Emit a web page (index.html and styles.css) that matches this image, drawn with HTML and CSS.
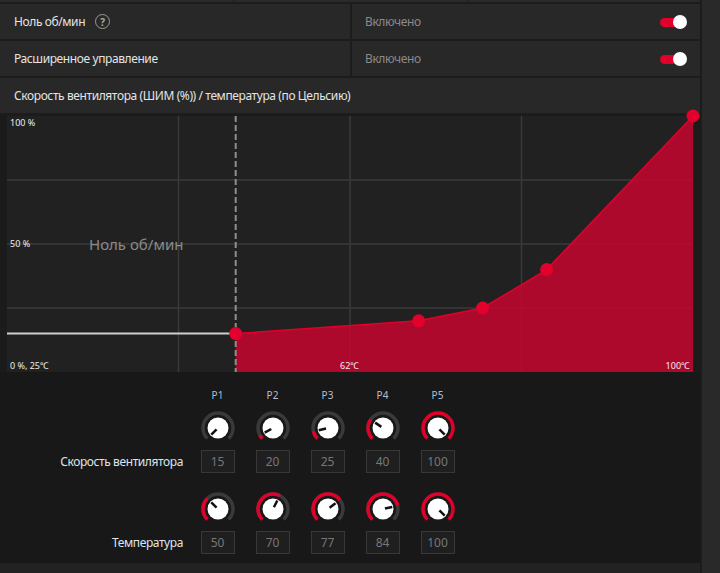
FILE: index.html
```html
<!DOCTYPE html>
<html lang="ru">
<head>
<meta charset="utf-8">
<title>Fan tuning</title>
<link rel="stylesheet" href="styles.css">
</head>
<body>
<div class="app">
  <div class="main">
    <div class="toprow"><div class="tcell"></div><div class="tcell"></div><div class="tcell"></div></div>
    <div class="row">
      <div class="cell"><span class="label">Ноль об/мин</span><span class="help">?</span></div>
      <div class="cell cell-value"><span class="value">Включено</span><span class="toggle"><span class="toggle-knob"></span></span></div>
    </div>
    <div class="row">
      <div class="cell"><span class="label">Расширенное управление</span></div>
      <div class="cell cell-value"><span class="value">Включено</span><span class="toggle"><span class="toggle-knob"></span></span></div>
    </div>
    <div class="title">Скорость вентилятора (ШИМ (%)) / температура (по Цельсию)</div>
    <div class="panel">
      <div class="chart">
        <svg class="chart-svg" width="686" height="256" viewBox="0 0 686 256">
          <g class="grid">
            <line x1="171.5" y1="0" x2="171.5" y2="256"/>
            <line x1="343" y1="0" x2="343" y2="256"/>
            <line x1="514.5" y1="0" x2="514.5" y2="256"/>
            <line x1="0" y1="64" x2="686" y2="64"/>
            <line x1="0" y1="128" x2="686" y2="128"/>
            <line x1="0" y1="192" x2="686" y2="192"/>
          </g>
          <polygon class="area" points="228.7,217.6 411.6,204.8 475.6,192 539.6,153.6 686,0 686,256 228.7,256"/>
          <polyline class="curve" points="228.7,217.6 411.6,204.8 475.6,192 539.6,153.6 686,0"/>
          <line class="zero-line" x1="0" y1="217.6" x2="228.7" y2="217.6"/>
          <line class="dash-line" x1="228.7" y1="0" x2="228.7" y2="256"/>
          <text class="axis" x="3" y="10">100 %</text>
          <text class="axis" x="3" y="131">50 %</text>
          <text class="axis" x="3" y="253">0 %, 25℃</text>
          <text class="axis" x="333" y="253">62℃</text>
          <text class="axis" x="683" y="253" text-anchor="end">100℃</text>
          <text class="zero-text" x="82" y="134">Ноль об/мин</text>
          <circle class="pt" cx="228.7" cy="217.6" r="6.5"/>
          <circle class="pt" cx="411.6" cy="204.8" r="6.5"/>
          <circle class="pt" cx="475.6" cy="192" r="6.5"/>
          <circle class="pt" cx="539.6" cy="153.6" r="6.5"/>
          <circle class="pt" cx="686" cy="0" r="6.5"/>
        </svg>
      </div>
      <div class="knobs">
        <div class="krow krow-head">
          <span></span>
          <span class="plabel">P1</span><span class="plabel">P2</span><span class="plabel">P3</span><span class="plabel">P4</span><span class="plabel">P5</span>
        </div>
        <div class="krow krow-knob">
          <span></span>
          <svg class="knob" viewBox="0 0 34 34"><path class="track" d="M6.39 27.61A15 15 0 1 1 27.61 27.61"/><circle class="face" cx="17" cy="17" r="10.5"/><line class="ptr" x1="15.59" y1="18.41" x2="10.28" y2="23.72"/></svg>
          <svg class="knob" viewBox="0 0 34 34"><path class="track" d="M6.39 27.61A15 15 0 1 1 27.61 27.61"/><path class="arc" d="M6.39 27.61A15 15 0 0 1 3.89 24.30"/><circle class="face" cx="17" cy="17" r="10.5"/><line class="ptr" x1="15.25" y1="17.97" x2="8.70" y2="21.62"/></svg>
          <svg class="knob" viewBox="0 0 34 34"><path class="track" d="M6.39 27.61A15 15 0 1 1 27.61 27.61"/><path class="arc" d="M6.39 27.61A15 15 0 0 1 2.40 20.44"/><circle class="face" cx="17" cy="17" r="10.5"/><line class="ptr" x1="15.05" y1="17.46" x2="7.75" y2="19.18"/></svg>
          <svg class="knob" viewBox="0 0 34 34"><path class="track" d="M6.39 27.61A15 15 0 1 1 27.61 27.61"/><path class="arc" d="M6.39 27.61A15 15 0 0 1 4.63 8.52"/><circle class="face" cx="17" cy="17" r="10.5"/><line class="ptr" x1="15.35" y1="15.87" x2="9.16" y2="11.63"/></svg>
          <svg class="knob" viewBox="0 0 34 34"><path class="arc" d="M6.39 27.61A15 15 0 1 1 27.61 27.61"/><circle class="face" cx="17" cy="17" r="10.5"/><line class="ptr" x1="18.41" y1="18.41" x2="23.72" y2="23.72"/></svg>
        </div>
        <div class="krow krow-box">
          <span class="rlabel">Скорость вентилятора</span>
          <span class="box">15</span><span class="box">20</span><span class="box">25</span><span class="box">40</span><span class="box">100</span>
        </div>
        <div class="krow krow-knob krow-knob2">
          <span></span>
          <svg class="knob" viewBox="0 0 34 34"><path class="track" d="M6.39 27.61A15 15 0 1 1 27.61 27.61"/><path class="arc" d="M6.39 27.61A15 15 0 0 1 6.39 6.39"/><circle class="face" cx="17" cy="17" r="10.5"/><line class="ptr" x1="15.59" y1="15.59" x2="10.28" y2="10.28"/></svg>
          <svg class="knob" viewBox="0 0 34 34"><path class="track" d="M6.39 27.61A15 15 0 1 1 27.61 27.61"/><path class="arc" d="M6.39 27.61A15 15 0 0 1 23.81 3.64"/><circle class="face" cx="17" cy="17" r="10.5"/><line class="ptr" x1="17.91" y1="15.22" x2="21.31" y2="8.54"/></svg>
          <svg class="knob" viewBox="0 0 34 34"><path class="track" d="M6.39 27.61A15 15 0 1 1 27.61 27.61"/><path class="arc" d="M6.39 27.61A15 15 0 1 1 28.85 7.81"/><circle class="face" cx="17" cy="17" r="10.5"/><line class="ptr" x1="18.58" y1="15.77" x2="24.51" y2="11.18"/></svg>
          <svg class="knob" viewBox="0 0 34 34"><path class="track" d="M6.39 27.61A15 15 0 1 1 27.61 27.61"/><path class="arc" d="M6.39 27.61A15 15 0 1 1 31.64 13.73"/><circle class="face" cx="17" cy="17" r="10.5"/><line class="ptr" x1="18.95" y1="16.56" x2="26.27" y2="14.93"/></svg>
          <svg class="knob" viewBox="0 0 34 34"><path class="arc" d="M6.39 27.61A15 15 0 1 1 27.61 27.61"/><circle class="face" cx="17" cy="17" r="10.5"/><line class="ptr" x1="18.41" y1="18.41" x2="23.72" y2="23.72"/></svg>
        </div>
        <div class="krow krow-box">
          <span class="rlabel">Температура</span>
          <span class="box">50</span><span class="box">70</span><span class="box">77</span><span class="box">84</span><span class="box">100</span>
        </div>
      </div>
    </div>
    <div class="bottom"></div>
  </div>
  <div class="side"></div>
</div>
</body>
</html>
```

FILE: styles.css
```css
* { box-sizing: border-box; }
html, body { margin: 0; padding: 0; }
body {
  width: 720px;
  height: 573px;
  overflow: hidden;
  background: #1c1c1c;
  font-family: "Noto Sans", "Open Sans", sans-serif;
  color: #e2e2e2;
}
.app {
  display: flex;
  gap: 2px;
  height: 573px;
}
.main {
  width: 700px;
  display: flex;
  flex-direction: column;
  gap: 2px;
  background: #1c1c1c;
}
.side {
  flex: 1;
  background: #292929;
}
.toprow {
  height: 2px;
  display: grid;
  grid-template-columns: 233px 233px 1fr;
  gap: 1px;
}
.tcell { background: #2a2a2a; }
.row {
  height: 35px;
  display: grid;
  grid-template-columns: 350px 1fr;
  gap: 2px;
}
.cell {
  background: #282828;
  display: flex;
  align-items: center;
  padding: 0 14px;
}
.label { font-size: 12px; letter-spacing: -0.4px; color: #e4e4e4; }
.help {
  width: 15px;
  height: 15px;
  margin-left: 10px;
  border: 1.4px solid #9a9a9a;
  border-radius: 50%;
  display: inline-flex;
  align-items: center;
  justify-content: center;
  font-size: 10px;
  font-weight: 700;
  color: #a8a8a8;
  line-height: 1;
}
.cell-value {
  padding: 0 13px 0 13px;
  justify-content: space-between;
}
.value { font-size: 12px; letter-spacing: -0.4px; color: #8a8a8a; }
.toggle {
  position: relative;
  width: 27px;
  height: 14px;
}
.toggle::before {
  content: "";
  position: absolute;
  left: 0;
  top: 3px;
  width: 24px;
  height: 9px;
  border-radius: 5px;
  background: #e0002b;
}
.toggle-knob {
  position: absolute;
  right: 0;
  top: 0;
  width: 14px;
  height: 14px;
  border-radius: 50%;
  background: #ffffff;
}
.title {
  height: 35px;
  background: #282828;
  display: flex;
  align-items: center;
  padding: 0 14px;
  font-size: 12px;
  letter-spacing: -0.4px;
  color: #e4e4e4;
}
.panel {
  display: flex;
  flex-direction: column;
}
.chart {
  background: #1b1b1b;
  padding: 1px 7px 0 7px;
  height: 257px;
}
.chart-svg {
  display: block;
  background: #212121;
  overflow: visible;
}
.grid line { stroke: #3a3a3a; stroke-width: 1.5; }
.area { fill: #c4062e; fill-opacity: 0.86; }
.curve { fill: none; stroke: #e0002b; stroke-width: 1.5; }
.zero-line { stroke: #cfcfcf; stroke-width: 2; }
.dash-line { stroke: #8e8e8e; stroke-width: 2; stroke-dasharray: 6 3; }
.pt { fill: #e2002c; }
.axis {
  font-family: "Noto Sans", sans-serif;
  font-size: 9px;
  fill: #eeeeee;
}
.zero-text {
  font-family: "Noto Sans", sans-serif;
  font-size: 15px;
  fill: #8a8a8a;
}
.knobs {
  height: 191px;
  background: #181818;
  padding-top: 13px;
}
.krow {
  display: grid;
  grid-template-columns: 190px repeat(5, 55px);
  align-items: center;
  justify-items: center;
}
.krow-head { height: 20px; }
.krow-knob { height: 34px; margin-top: 6px; }
.krow-knob2 { margin-top: 19px; }
.krow-box { height: 23px; margin-top: 5px; }
.plabel { font-size: 10px; color: #b4bfd0; }
.rlabel {
  justify-self: end;
  padding-right: 7px;
  font-size: 12px;
  letter-spacing: -0.4px;
  color: #dfe4ec;
}
.knob { width: 34px; height: 34px; display: block; }
.track { fill: none; stroke: #3a3a3a; stroke-width: 3.5; }
.arc { fill: none; stroke: #e0002b; stroke-width: 3.5; }
.face { fill: #ffffff; }
.ptr { stroke: #111111; stroke-width: 2.5; }
.box {
  width: 34px;
  height: 23px;
  border: 1px solid #383838;
  background: #1f1f1f;
  display: flex;
  align-items: center;
  justify-content: center;
  font-size: 12px;
  color: #777777;
}
.bottom {
  flex: 1;
  background: #222222;
  margin-top: -2px;
}
```
